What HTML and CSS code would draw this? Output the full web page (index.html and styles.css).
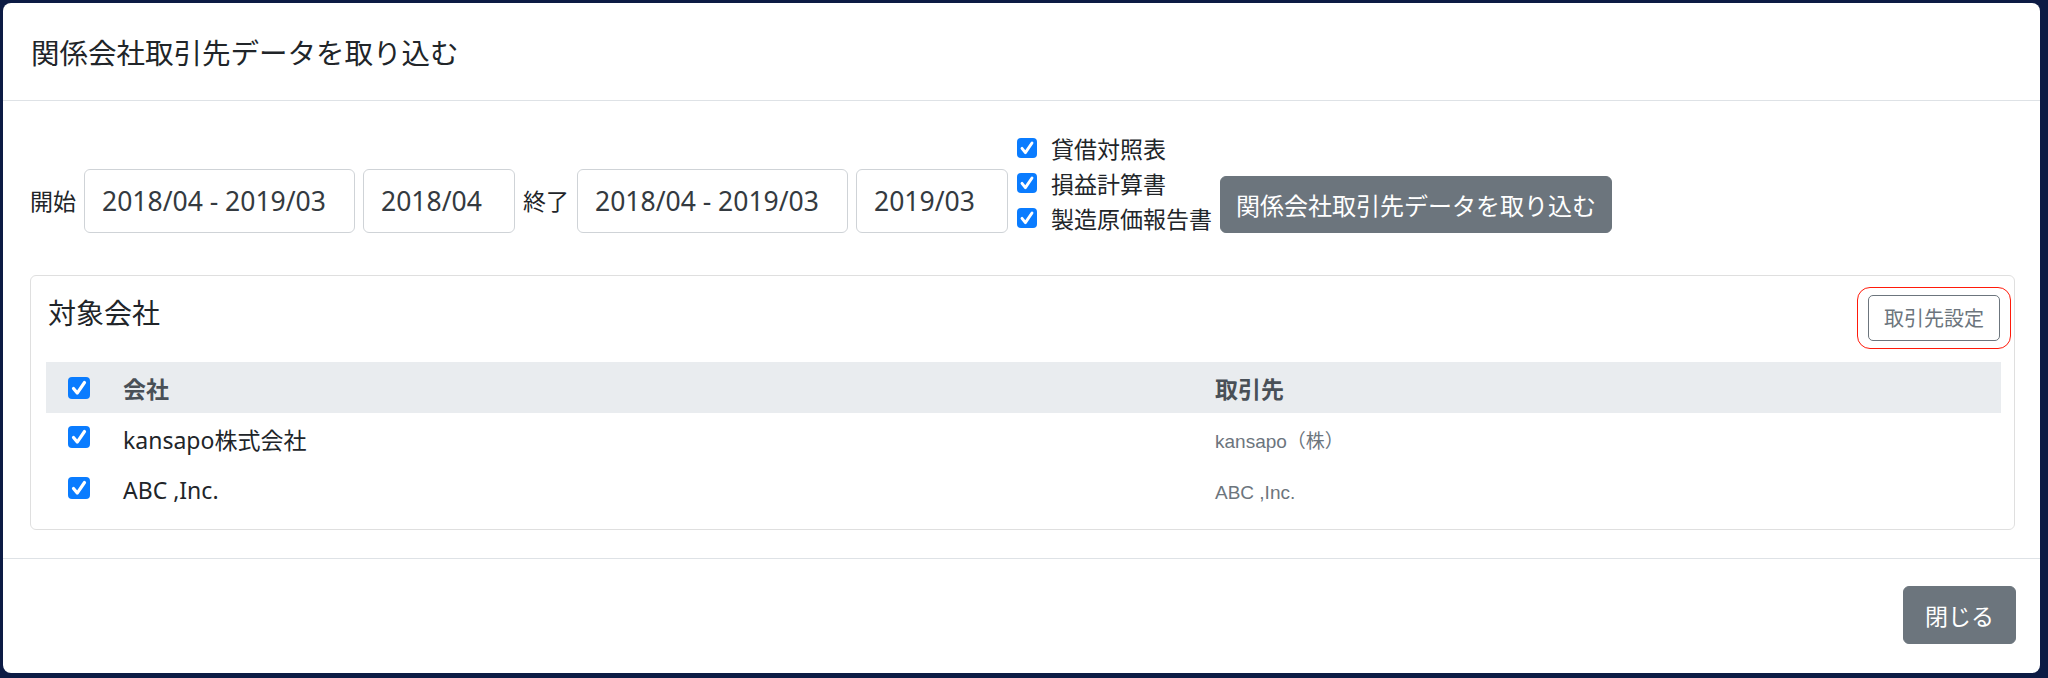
FILE: index.html
```html
<!DOCTYPE html>
<html lang="ja">
<head>
    <meta charset="UTF-8">
    <meta name="viewport" content="width=device-width, initial-scale=1.0">
    <title>関係会社取引先データを取り込む</title>
    <link rel="stylesheet" href="styles.css">
</head>
<body>
    <div class="modal">
        <div class="modal-header">
            <h5 class="modal-title">関係会社取引先データを取り込む</h5>
        </div>

        <div class="modal-body">
            <div class="import-form">
                <span class="form-label">開始</span>
                <input class="form-control range" type="text" value="2018/04 - 2019/03">
                <input class="form-control month" type="text" value="2018/04">
                <span class="form-label">終了</span>
                <input class="form-control range" type="text" value="2018/04 - 2019/03">
                <input class="form-control month" type="text" value="2019/03">
                <div class="report-list">
                    <label class="report-item"><span class="check"></span>貸借対照表</label>
                    <label class="report-item"><span class="check"></span>損益計算書</label>
                    <label class="report-item"><span class="check"></span>製造原価報告書</label>
                </div>
                <button class="btn btn-secondary btn-import">関係会社取引先データを取り込む</button>
            </div>

            <div class="card">
                <div class="card-header">
                    <h5 class="card-title">対象会社</h5>
                    <div class="highlight">
                        <button class="btn btn-outline">取引先設定</button>
                    </div>
                </div>

                <div class="company-table">
                    <div class="table-row table-head">
                        <div class="cell-check"><span class="check"></span></div>
                        <div class="cell">会社</div>
                        <div class="cell">取引先</div>
                    </div>
                    <div class="table-row">
                        <div class="cell-check"><span class="check"></span></div>
                        <div class="cell">kansapo株式会社</div>
                        <div class="cell"><small class="partner">kansapo（株）</small></div>
                    </div>
                    <div class="table-row">
                        <div class="cell-check"><span class="check"></span></div>
                        <div class="cell">ABC ,Inc.</div>
                        <div class="cell"><small class="partner">ABC ,Inc.</small></div>
                    </div>
                </div>
            </div>
        </div>

        <div class="modal-footer">
            <button class="btn btn-secondary btn-close">閉じる</button>
        </div>
    </div>
</body>
</html>
```

FILE: styles.css
```css
body, html {
    margin: 0;
    padding: 0;
    height: 100%;
    background-color: #0c1b44;
    font-family: 'Noto Sans', 'Noto Sans CJK JP', sans-serif;
    color: #212529;
}
.modal {
    margin: 3px 8px 0 3px;
    height: 670px;
    background-color: #ffffff;
    border-radius: 8px;
    display: flex;
    flex-direction: column;
    overflow: hidden;
}
.modal-header {
    height: 98px;
    padding: 4px 26px 0 28px;
    box-sizing: border-box;
    display: flex;
    align-items: center;
    border-bottom: 1px solid #dee2e6;
}
.modal-title {
    margin: 0;
    font-size: 28.5px;
    font-weight: normal;
    line-height: 1.4;
}
.modal-body {
    padding: 29px 25px 28px 27px;
    border-bottom: 1px solid #dee2e6;
}
.import-form {
    display: flex;
    align-items: flex-end;
    height: 105px;
    gap: 8px;
    font-size: 23px;
}
.form-label {
    line-height: 64px;
    margin-bottom: 2px;
}
.form-control {
    box-sizing: border-box;
    height: 64px;
    margin: 0 0 2px 0;
    padding: 0 0 0 17px;
    border: 1px solid #cfd3d7;
    border-radius: 6px;
    font-family: inherit;
    font-size: 26.5px;
    color: #343a40;
    background: #fff;
}
.form-control.range {
    width: 271px;
}
.form-control.month {
    width: 152px;
}
.report-list {
    display: flex;
    flex-direction: column;
    margin-left: 1px;
}
.report-item {
    display: flex;
    align-items: center;
    height: 35px;
    gap: 14px;
}
.check {
    display: inline-block;
    flex: none;
    width: 20px;
    height: 20px;
    border-radius: 4px;
    background-color: #0a7cff;
    background-image: url("data:image/svg+xml,%3Csvg xmlns='http://www.w3.org/2000/svg' viewBox='0 0 20 20'%3E%3Cpath d='M5 10.4l3.4 4.2 6.6-9.6' fill='none' stroke='white' stroke-width='2.9' stroke-linecap='round' stroke-linejoin='round'/%3E%3C/svg%3E");
}
.btn {
    font-family: inherit;
    border-radius: 6px;
    cursor: pointer;
}
.btn-secondary {
    background-color: #6c757d;
    border: 1px solid #6c757d;
    color: #ffffff;
    font-size: 23px;
}
.btn-import {
    height: 57px;
    padding: 0 15px;
    margin: 0 0 2px 0;
    font-size: 24px;
}
.card {
    margin-top: 40px;
    border: 1px solid #dfdfdf;
    border-radius: 6px;
    padding: 6px 13px 14px 15px;
}
.card-header {
    display: flex;
    justify-content: space-between;
    align-items: flex-start;
    padding-left: 2px;
}
.card-title {
    margin: 13px 0 0 0;
    font-size: 28px;
    font-weight: normal;
    line-height: 1.3;
}
.highlight {
    margin: 5px -10px 0 0;
    border: 1.5px solid #ff1a0a;
    border-radius: 13px;
    padding: 6.5px 10px 7.5px 10.5px;
}
.btn-outline {
    display: block;
    width: 132px;
    height: 46px;
    padding: 0;
    background: #ffffff;
    border: 1px solid #6c757d;
    border-radius: 5px;
    color: #6c757d;
    font-size: 20px;
}
.company-table {
    margin-top: 13px;
    font-size: 23px;
}
.table-row {
    display: grid;
    grid-template-columns: 77px 1092px 1fr;
    align-items: center;
    height: 51px;
}
.table-head {
    background-color: #e9ecef;
    color: #495057;
    font-weight: bold;
}
.cell-check {
    padding-left: 22px;
    display: flex;
    align-items: center;
}
.cell-check .check {
    width: 22px;
    height: 22px;
    margin-top: -4px;
}
.table-head .cell-check .check {
    margin-top: 1px;
}
.partner {
    font-family: 'Liberation Sans', 'Noto Sans CJK JP', sans-serif;
    font-size: 19px;
    color: #6c757d;
}
.modal-footer {
    flex: 1;
    display: flex;
    justify-content: flex-end;
    align-items: flex-start;
    padding: 27px 24px 0 0;
}
.btn-close {
    width: 113px;
    height: 58px;
    padding: 0;
}
```
